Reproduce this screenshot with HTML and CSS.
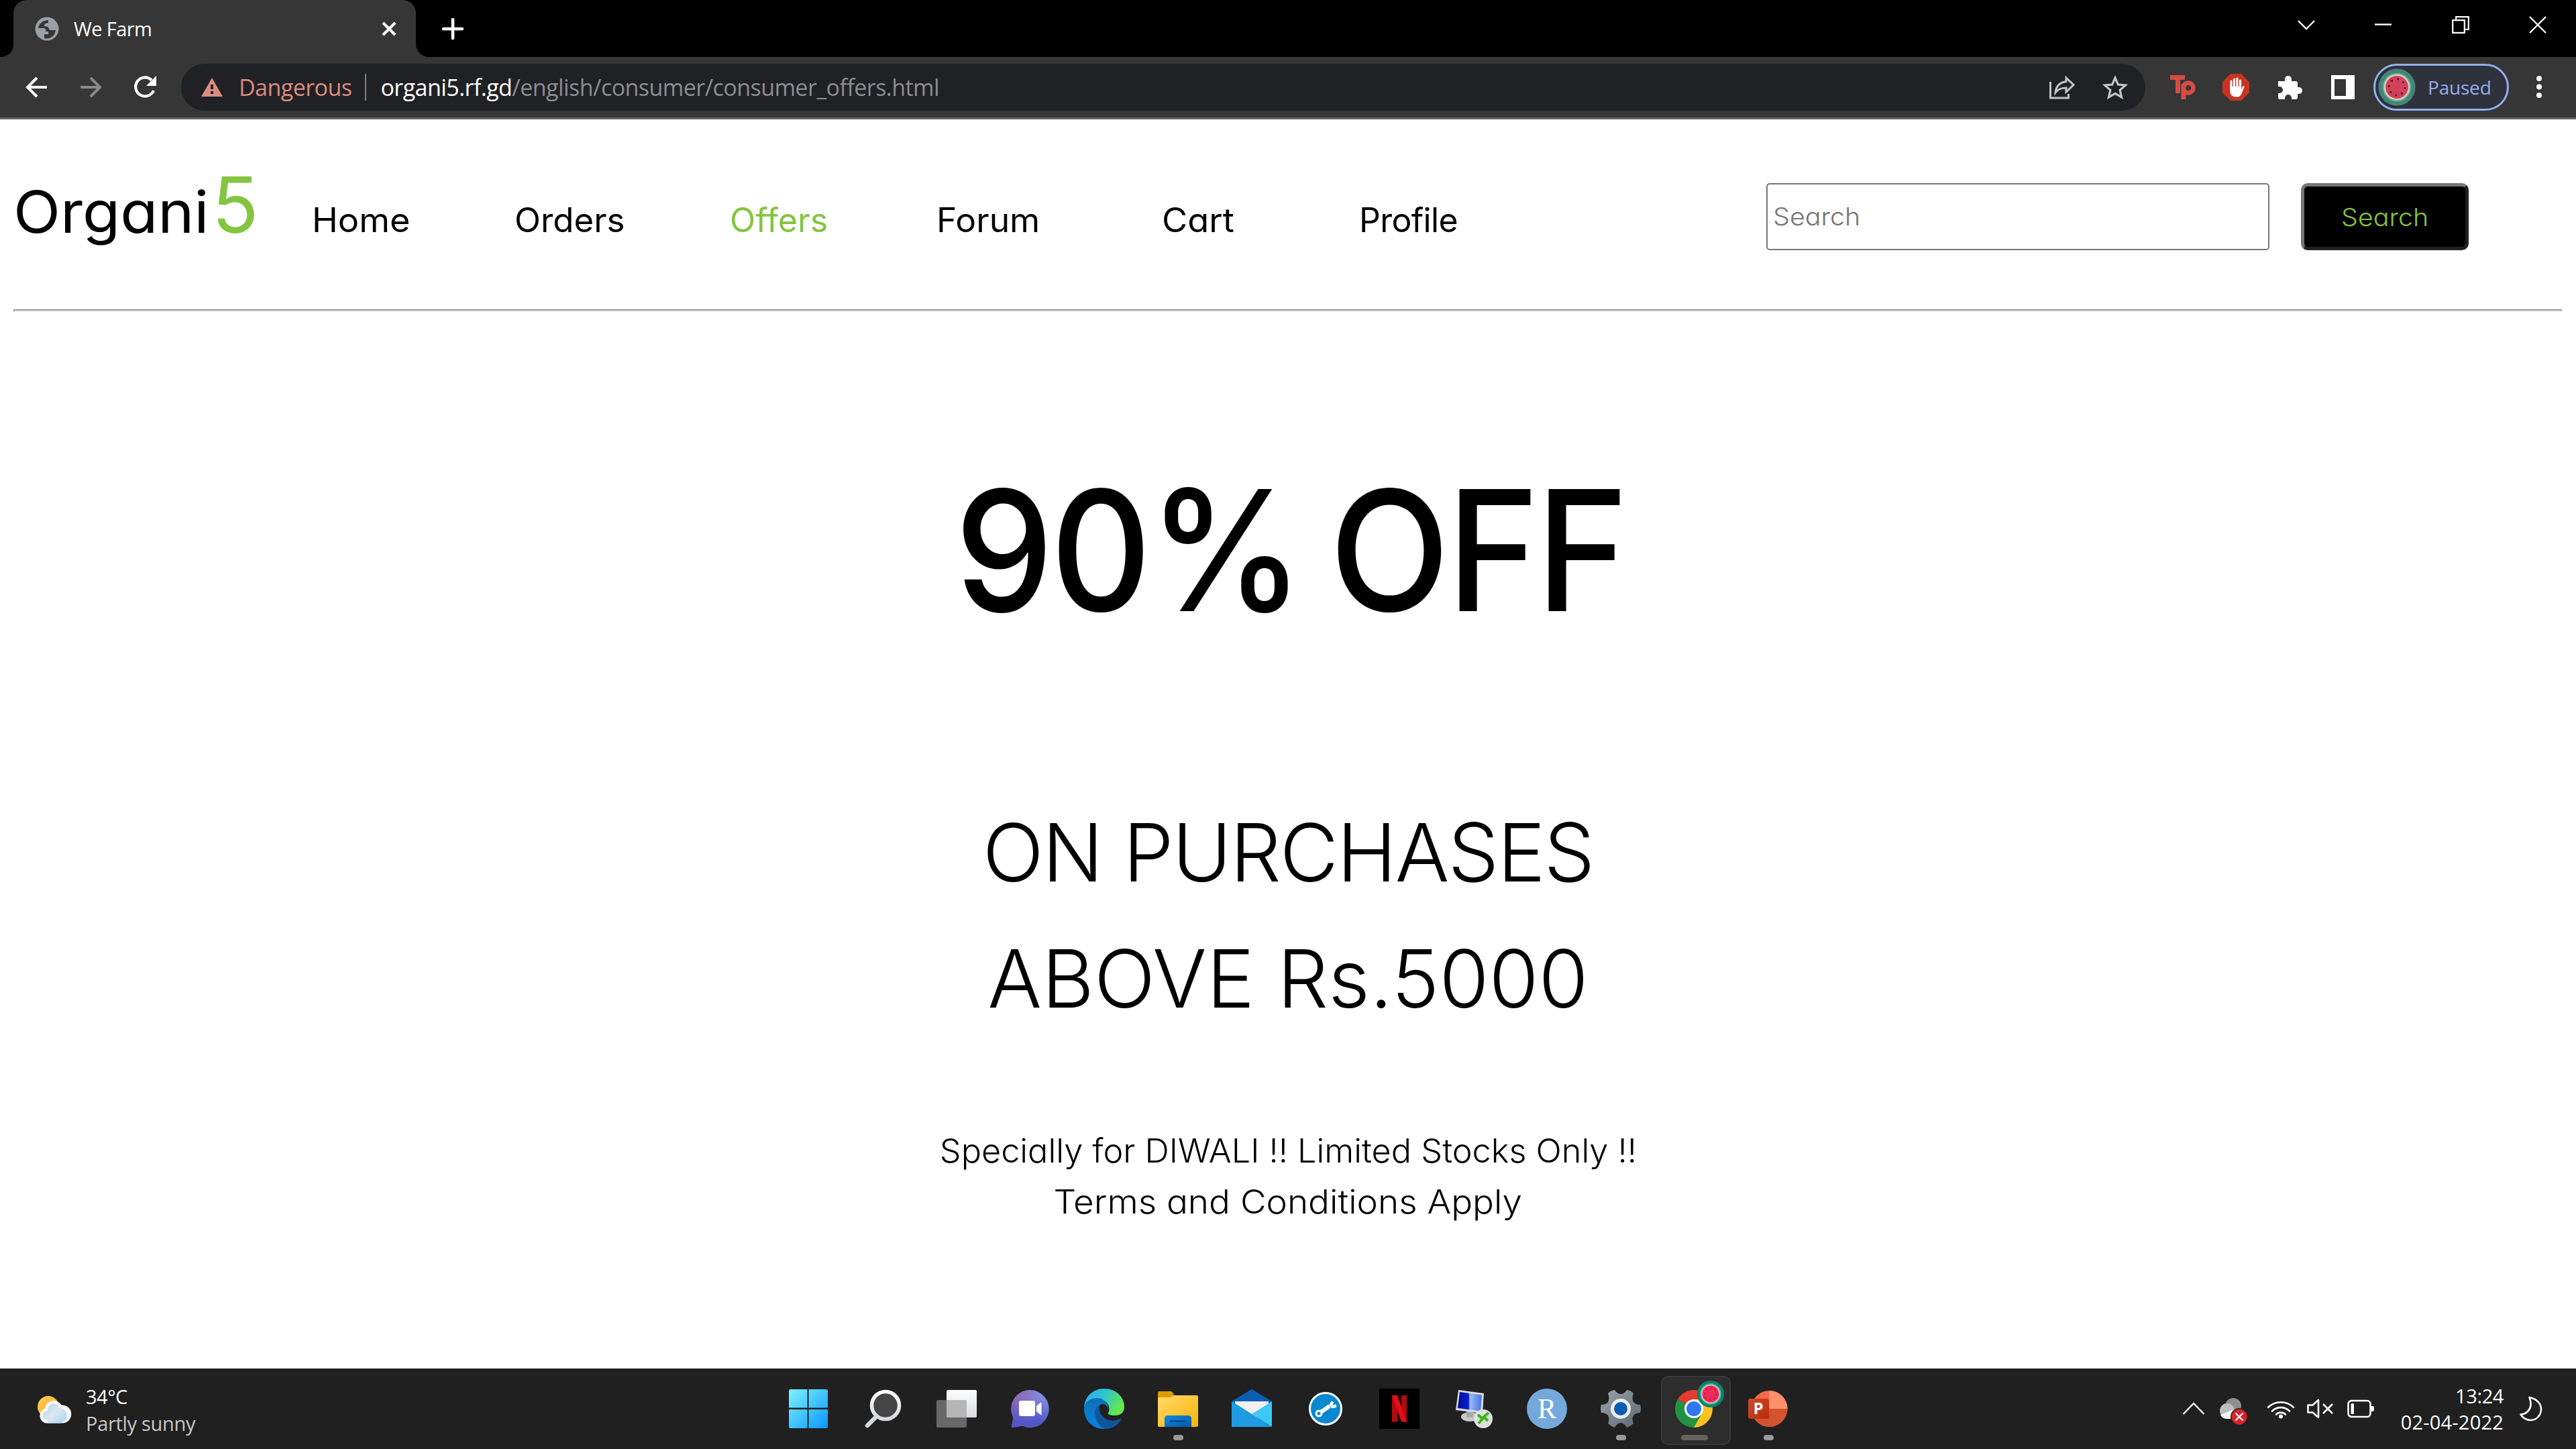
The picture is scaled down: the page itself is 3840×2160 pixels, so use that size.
FILE: index.html
```html
<!DOCTYPE html>
<html lang="en">
<head>
<meta charset="utf-8">
<title>We Farm</title>
<link rel="stylesheet" href="styles.css">
</head>
<body>
<header class="browser">
  <div class="tabstrip">
    <svg class="flare" width="20" height="20" viewBox="0 0 20 20"><path d="M20 0v20H0C12 20 20 12 20 0z" fill="#363636"/></svg>
    <div class="tab">
      <svg width="36" height="36" viewBox="0 0 36 36"><circle cx="18" cy="18" r="17.5" fill="#9aa0a6"/><path d="M20 5c-8 0-14 5-15 12h8c4 0 4 4 3 5h4v4h-6v6c10 2 16-4 17-12h-9c-1-4-3-6-8-6 0-4 2-4 6-5z" fill="#363636"/></svg>
      <span class="tab-title">We Farm</span>
      <svg class="tab-close" width="22" height="22" viewBox="0 0 22 22"><path d="M2 2l18 18M20 2L2 20" stroke="#fff" stroke-width="4"/></svg>
    </div>
    <svg class="flare" width="20" height="20" viewBox="0 0 20 20"><path d="M0 0v20h20C8 20 0 12 0 0z" fill="#363636"/></svg>
    <svg class="newtab" width="32" height="32" viewBox="0 0 32 32"><path d="M16 2v28M2 16h28" stroke="#fff" stroke-width="4.6" stroke-linecap="round"/></svg>
    <div class="winctl">
      <svg width="26" height="26" viewBox="0 0 26 26"><path d="M1 7l12 12L25 7" fill="none" stroke="#fff" stroke-width="2.4"/></svg>
      <svg width="26" height="26" viewBox="0 0 26 26"><path d="M0 12.500h25" stroke="#fff" stroke-width="2.4"/></svg>
      <svg width="26" height="26" viewBox="0 0 26 26"><path d="M1.200 6.200h17.600v18.600H1.200zM6.200 6V1.200h18.600v18.600H19" fill="none" stroke="#fff" stroke-width="2.2"/></svg>
      <svg width="26" height="26" viewBox="0 0 26 26"><path d="M1 1l24 24M25 1L1 25" stroke="#fff" stroke-width="2.4"/></svg>
    </div>
  </div>
  <div class="toolbar">
    <svg class="back" width="34" height="34" viewBox="0 0 34 34"><path d="M32 17H4M17 3L3 17l14 14" fill="none" stroke="#fff" stroke-width="4"/></svg>
    <svg class="forward" width="34" height="34" viewBox="0 0 34 34"><path d="M2 17h28M17 3l14 14-14 14" fill="none" stroke="#8a8a8a" stroke-width="4"/></svg>
    <svg class="reload" width="36" height="36" viewBox="0 0 36 36"><path d="M31 23a14 14 0 1 1-3-15.500" fill="none" stroke="#fff" stroke-width="4.200"/><path d="M35 1v15H20z" fill="#fff"/></svg>
    <div class="omnibox">
      <svg width="32" height="28" viewBox="0 0 32 28"><path d="M16 0l16 28H0z" fill="#dc8b80"/><path d="M16 10v7M16 20v4" stroke="#202124" stroke-width="4"/></svg>
      <span class="danger">Dangerous</span>
      <span class="sep"></span>
      <span class="url"><span class="host">organi5.rf.gd</span>/english/consumer/consumer_offers.html</span>
      <svg class="share" width="38" height="36" viewBox="0 0 38 36"><path d="M1.500 10v24h27v-6" fill="none" stroke="#c4c4c4" stroke-width="3"/><path d="M25 4l11 10.500L25 25v-6c-8 0-12 2-16 7 1-10 6-15 16-16.500z" fill="none" stroke="#c4c4c4" stroke-width="3"/></svg>
      <svg class="star" width="38" height="36" viewBox="0 0 38 36"><path d="M19 4l4.400 10.100 11 1-8.300 7.200 2.500 10.700L19 27.300 9.400 33l2.500-10.700-8.300-7.200 11-1z" fill="none" stroke="#c4c4c4" stroke-width="3.200"/></svg>
    </div>
    <svg class="ext-tp" width="38" height="36" viewBox="0 0 38 36"><path d="M0 0h22v7h-7v20H8V7H0z" fill="#d54d42"/><path d="M20 36V13" stroke="#d54d42" stroke-width="7"/><circle cx="27" cy="19" r="7.500" fill="none" stroke="#d54d42" stroke-width="6.500"/></svg>
    <svg class="ext-stop" width="40" height="40" viewBox="0 0 40 40"><path d="M12 0h16l12 12v16L28 40H12L0 28V12z" fill="#c83420"/><path d="M13 22V11M17.500 20V8M22 20V7M26.500 21V10" stroke="#fff" stroke-width="3.200" stroke-linecap="round"/><path d="M11.400 19h16.700v4l2-4c1-2 3-1 2.500.5l-4.600 11c-2 4-4 4-8 4-6 0-8.600-4-8.600-9z" fill="#fff"/></svg>
    <svg class="ext-puzzle" width="38" height="38" viewBox="0 0 38 38"><path d="M2 10h9V7a5 5 0 0 1 10 0v3h6q3 0 3 3v6h2a5 5 0 0 1 0 10h-2v5q0 3-3 3h-6v-2a5 5 0 0 0-10 0v2H4q-3 0-3-3v-6h2a5 5 0 0 0 0-10H1v-8z" fill="#fff"/></svg>
    <svg class="ext-panel" width="35" height="36" viewBox="0 0 35 36"><path d="M0 0h35v36H0zM5 6v25h17V6z" fill="#fff" fill-rule="evenodd"/></svg>
    <div class="profile">
      <svg width="56" height="56" viewBox="0 0 56 56"><circle cx="28" cy="28" r="27.500" fill="#458678"/><circle cx="28" cy="28" r="21" fill="#66bf9f"/><circle cx="28" cy="28" r="19" fill="#f6c9c4"/><circle cx="28" cy="28" r="17" fill="#d2405a"/><circle cx="28" cy="28" r="12" fill="none" stroke="#3a1620" stroke-width="2.600" stroke-dasharray="2.600 6.820"/></svg>
      <span class="paused">Paused</span>
    </div>
    <svg class="kebab" width="10" height="36" viewBox="0 0 10 36"><g fill="#fff"><circle cx="5" cy="5" r="4"/><circle cx="5" cy="17.500" r="4"/><circle cx="5" cy="30" r="4"/></g></svg>
  </div>
</header>

<main class="page">
  <div class="masthead">
    <div class="logo"><span class="logo-name">Organi</span><span class="logo-five">5</span></div>
    <nav class="menu">
      <a class="home">Home</a><a class="orders">Orders</a><a class="active">Offers</a><a class="forum">Forum</a><a class="cart">Cart</a><a class="account">Profile</a>
    </nav>
    <form class="search">
      <div class="field"><span>Search</span></div>
      <button type="button"><span>Search</span></button>
    </form>
  </div>
  <hr>
  <section class="offer">
    <h1>90% OFF</h1>
    <h2><span class="purchases">ON PURCHASES</span><br>ABOVE Rs.5000</h2>
    <p><span class="special">Specially for DIWALI !! Limited Stocks Only !!</span><br><span class="terms">Terms and Conditions Apply</span></p>
  </section>
</main>

<footer class="taskbar">
  <svg width="0" height="0" class="defs"><defs>
    <linearGradient id="win" x1="0" y1="0" x2="58" y2="58" gradientUnits="userSpaceOnUse"><stop offset="0" stop-color="#7df3ff"/><stop offset="1" stop-color="#0a96ff"/></linearGradient>
    <linearGradient id="sun" x1="0" y1="0" x2="1" y2="1"><stop offset="0" stop-color="#ffd45c"/><stop offset="1" stop-color="#f59a13"/></linearGradient>
    <linearGradient id="cloud" x1="0" y1="0" x2="1" y2="1"><stop offset="0" stop-color="#bcd3e2"/><stop offset=".5" stop-color="#dce8f0"/><stop offset="1" stop-color="#9bd4f5"/></linearGradient>
    <linearGradient id="grey" x1="0" y1="0" x2="0" y2="1"><stop offset="0" stop-color="#fff"/><stop offset="1" stop-color="#d6dade"/></linearGradient>
    <linearGradient id="chat" x1="0" y1="0" x2="1" y2=".3"><stop offset="0" stop-color="#8f62a8"/><stop offset="1" stop-color="#7f93ea"/></linearGradient>
    <linearGradient id="chat2" x1="0" y1="0" x2="0" y2="1"><stop offset=".2" stop-color="#5558c8" stop-opacity="0"/><stop offset=".85" stop-color="#5356c8"/></linearGradient>
    <linearGradient id="edge" x1="0" y1="0" x2="1" y2=".4"><stop offset="0" stop-color="#2fa7ee"/><stop offset=".5" stop-color="#2cc3d5"/><stop offset="1" stop-color="#63e84e"/></linearGradient>
    <linearGradient id="edge2" x1="0" y1="0" x2="0" y2="1"><stop offset="0" stop-color="#0d72b8"/><stop offset="1" stop-color="#0a80dc"/></linearGradient>
    <linearGradient id="folder" x1="0" y1="0" x2="1" y2="1"><stop offset="0" stop-color="#ffd96b"/><stop offset="1" stop-color="#f8b508"/></linearGradient>
    <linearGradient id="blue" x1="0" y1="0" x2="1" y2="1"><stop offset="0" stop-color="#1089de"/><stop offset="1" stop-color="#0858a8"/></linearGradient>
    <linearGradient id="gear" x1="0" y1="0" x2="1" y2="1"><stop offset="0" stop-color="#9aa2a8"/><stop offset="1" stop-color="#5d6873"/></linearGradient>
    <linearGradient id="screen" x1="0" y1="0" x2="1" y2="0"><stop offset="0" stop-color="#000a90"/><stop offset=".45" stop-color="#0a20d8"/><stop offset=".5" stop-color="#9fbcf8"/><stop offset="1" stop-color="#4470e8"/></linearGradient>
    <linearGradient id="ppt" x1="0" y1="0" x2="1" y2="1"><stop offset="0" stop-color="#cf4a25"/><stop offset="1" stop-color="#b52e10"/></linearGradient>
  </defs></svg>
  <div class="weather">
    <svg width="54" height="42" viewBox="0 0 54 42"><circle cx="17" cy="16" r="16" fill="url(#sun)"/><path d="M13 40.500a11.500 11.500 0 0 1-1-22C13 12 18 7 25 7c5 0 9 2.500 11.500 6.500A13.500 13.500 0 0 1 39 40.500z" fill="#f6f8fa"/><path d="M16 36.500a7.500 7.500 0 0 1 0-15c0-6 4-10 9-10 5 0 8 3 9 6.500a11 11 0 0 1 6 20c-3 2.500-6 2.500-9 2.500H16z" fill="url(#cloud)"/></svg>
    <div class="weather-text"><div class="temp">34°C</div><div class="sky">Partly sunny</div></div>
  </div>
  <div class="apps">
    <div class="app"><svg width="60" height="60" viewBox="0 -1 60 60"><path d="M2 0h25.500v27.500H0V2q0-2 2-2zM29.500 0H56q2 0 2 2v25.500H29.500zM0 30h27.500v28H2q-2 0-2-2zM29.500 30H58v26q0 2-2 2H29.500z" fill="url(#win)"/></svg></div>
    <div class="app"><svg width="60" height="60" viewBox="0 0 60 60"><path d="M20 42L7 55" stroke="#d6dade" stroke-width="6.500" stroke-linecap="round"/><circle cx="34" cy="25" r="20.500" fill="#464646" stroke="url(#grey)" stroke-width="5.500"/></svg></div>
    <div class="app"><svg width="60" height="60" viewBox="0 0 60 60"><rect x="15" y="2" width="45" height="41" rx="2" fill="url(#grey)"/><rect x="0" y="17" width="45" height="41" rx="2" fill="#686868"/><path d="M15 17h30v26H15z" fill="#b6b6b6"/></svg></div>
    <div class="app"><svg width="60" height="60" viewBox="0 0 60 60"><path d="M30 2a28 28 0 1 1-12 53.500L3 58q-1.500 0-1-1.500L4.500 43A28 28 0 0 1 30 2z" fill="url(#chat)"/><path d="M30 2a28 28 0 1 1-12 53.500L3 58q-1.500 0-1-1.500L4.500 43A28 28 0 0 1 30 2z" fill="url(#chat2)"/><rect x="13" y="18" width="24" height="23" rx="3" fill="#fff"/><path d="M39.500 26l6.500-5v18l-6.500-5z" fill="#fff" stroke="#fff" stroke-linejoin="round"/></svg></div>
    <div class="app"><svg width="60" height="60" viewBox="0 0 60 60"><path d="M0 28C1 12 13 0 30 0c18 0 30 13 30 27 0 9-6 13-14 13-7 0-12-2-10-4 3-4 2-14-6-18C20 12 5 15 0 28z" fill="url(#edge)"/><path d="M0 30C0 19 10 14 19 14c11 0 18 8 17 17-1-5-4-8-8-8-8 0-12 10-10 18 2 9 9 16 15 18.800C14 62 0 48 0 30z" fill="url(#edge2)"/><path d="M25 23c-7 3-11 11-8 20 3 10 10 17 17 17 9-1 17-6 21-14 .5-1-.5-2-2-1-12 6-23 1-28-7-3-6-3-11 0-15z" fill="#0f55a0"/></svg></div>
    <div class="app run"><svg width="60" height="60" viewBox="0 0 60 60"><path d="M0 6q0-2 2-2h17q2 0 3 2l3 5v8H0z" fill="#dd9b05"/><path d="M0 15q0-2 2-2h17l5-3h34q2 0 2 2v43q0 2-2 2H2q-2 0-2-2z" fill="url(#folder)"/><path d="M10 57V45q0-5 5-5h30q5 0 5 5v12z" fill="url(#blue)"/><path d="M18 48.500h24" stroke="#0a4a94" stroke-width="2.600"/></svg></div>
    <div class="app"><svg width="60" height="60" viewBox="0 0 60 60"><path d="M0 19L28 2q2-1.500 4 0l28 17-4 9H4z" fill="#0a5fb5"/><path d="M5 19h50v14L30 48 5 33z" fill="#f1f1f1"/><path d="M0 19l30 19-30 19z" fill="#28a8ea"/><path d="M60 19L30 38l30 19z" fill="#3cc8f4"/><path d="M0 57V19l60 38z" fill="#1f9be4"/></svg></div>
    <div class="app"><svg width="60" height="60" viewBox="0 0 60 60"><circle cx="30" cy="30" r="23.500" fill="#0788d0" stroke="#fff" stroke-width="3"/><path d="M23 35L36 26" stroke="#fff" stroke-width="6"/><circle cx="20" cy="37" r="4" fill="none" stroke="#fff" stroke-width="3"/><path d="M40.500 19.500l-2.500 4.500 2.500 3 5.500-1.500" fill="none" stroke="#fff" stroke-width="4.500"/></svg></div>
    <div class="app"><svg width="60" height="60" viewBox="0 0 60 60"><path d="M0 0h60v60H0z"/><path d="M19 10h8v39l-8 1zM33 10h8v40l-8-1z" fill="#b20a13"/><path d="M19 10h8l14 40-8-1z" fill="#e50c17"/></svg></div>
    <div class="app"><svg width="60" height="60" viewBox="0 0 60 60"><ellipse cx="25" cy="42" rx="13" ry="7" fill="#c9c9c9"/><path d="M20 34h10v9H20z" fill="#a8a8a8"/><path d="M8 2l38 5-2 30L4 32z" fill="#dadada"/><path d="M10 5l33 4.500-2 24L7 29z" fill="url(#screen)"/><circle cx="45" cy="45" r="14" fill="#dedede"/><path d="M37 39l7 6-6 7M53 36l-7 6 6 6" fill="none" stroke="#38b51c" stroke-width="4"/></svg></div>
    <div class="app"><div class="rapp">R</div></div>
    <div class="app run"><svg width="60" height="60" viewBox="0 0 60 60"><path d="M21 2q4 6 9 6t9-6q7 1 10 5-3 8 0 13 3 4 10 4 2 6 0 12-7 0-10 4-3 5 0 12-4 4-10 6-4-7-9-7t-9 7q-6-2-10-6 3-7 0-12-3-4-10-4-2-6 0-12 7 0 10-4 3-5 0-13 3-4 10-5z" fill="url(#gear)"/><circle cx="30" cy="30" r="12.500" fill="#0c5db0" stroke="#ececec" stroke-width="5"/></svg></div>
    <div class="app current"><svg width="60" height="60" viewBox="0 0 60 60"><path d="M30 30L5.800 16A28 28 0 0 1 54.200 16z" fill="#e33b2e"/><path d="M30 30L5.800 16A28 28 0 0 0 30 58l12-21z" fill="#229342"/><path d="M30 30l12 7-12 21A28 28 0 0 0 54.200 16H30z" fill="#fcc31e"/><circle cx="30" cy="30" r="14" fill="#fff"/><circle cx="30" cy="30" r="11" fill="#2f78ee"/></svg>
      <svg class="badge" width="40" height="40" viewBox="0 0 40 40"><circle cx="20" cy="20" r="20" fill="#0b7f70"/><circle cx="20" cy="20" r="16" fill="#39b896"/><circle cx="20" cy="20" r="14" fill="#f7b8b4"/><circle cx="20" cy="20" r="12.500" fill="#ee2a58"/><circle cx="20" cy="20" r="9" fill="none" stroke="#b01c42" stroke-width="2" stroke-dasharray="2 5"/></svg></div>
    <div class="app run"><svg width="60" height="60" viewBox="0 0 60 60"><circle cx="31.500" cy="30" r="27" fill="#ee6c47"/><path d="M31.500 3a27 27 0 0 1 27 27h-27z" fill="#ff8f6b"/><path d="M4.500 30a27 27 0 0 0 54 0z" fill="#d35230"/><rect x="0" y="15" width="31" height="30" rx="3" fill="url(#ppt)"/><text x="15" y="38" text-anchor="middle" class="pletter">P</text></svg></div>
  </div>
  <div class="tray">
    <svg width="34" height="20" viewBox="0 0 34 20"><path d="M1.500 18L17 2l15.500 16" fill="none" stroke="#fff" stroke-width="2.400"/></svg>
    <svg class="t-cloud" width="42" height="42" viewBox="0 0 42 42"><circle cx="20" cy="12" r="12" fill="#8e8e8e"/><circle cx="11" cy="19" r="11" fill="#bdbdbd"/><path d="M1 25l20-8 8 14H9q-6-1-8-6z" fill="#f4f4f4"/><circle cx="29" cy="28" r="13" fill="#202020"/><circle cx="29" cy="28" r="11.500" fill="#dc2229"/><path d="M23.500 22.500l11 11m0-11l-11 11" stroke="#fff" stroke-width="2.200"/></svg>
    <svg class="t-wifi" width="42" height="30" viewBox="0 0 42 30"><path d="M2 13a27 27 0 0 1 38 0M8 18.500a18.500 18.500 0 0 1 26 0M14 23.500a10 10 0 0 1 14 0" fill="none" stroke="#fff" stroke-width="2.600" stroke-linecap="round"/><circle cx="21" cy="26.500" r="3" fill="#fff"/></svg>
    <svg class="t-vol" width="40" height="30" viewBox="0 0 40 30"><path d="M1.500 9.500h7L17 2v26l-8.500-7.500h-7z" fill="none" stroke="#fff" stroke-width="2.600" stroke-linejoin="round"/><path d="M24 8l14 14M38 8L24 22" stroke="#fff" stroke-width="2.600"/></svg>
    <svg class="t-bat" width="42" height="28" viewBox="0 0 42 28"><rect x="1.500" y="2" width="33" height="24" rx="5" fill="none" stroke="#fff" stroke-width="2.600"/><rect x="5.500" y="6" width="4.500" height="16" rx="1.500" fill="#fff"/><path d="M35 10h3q2 0 2 2v4q0 2-2 2h-3z" fill="#fff"/></svg>
    <div class="clock"><div class="time">13:24</div><div>02-04-2022</div></div>
    <svg class="t-moon" width="34" height="38" viewBox="0 0 34 38"><path d="M14.500 2C25 4 32 11 32 19.500 32 29 25 36 16 36 9.500 36 4 32 1.500 27.500 10 27 15.500 21 16.500 14c.5-4-.5-8-2-12z" fill="none" stroke="#fff" stroke-width="2.600" stroke-linejoin="round"/></svg>
  </div>
</footer>
</body>
</html>
```
FILE: styles.css
```css
* { box-sizing: border-box; }
body { margin: 0; width: 3840px; height: 2160px; overflow: hidden; display: flex; flex-direction: column; background: #fff; font-family: "Open Sans", "Noto Sans", sans-serif; }
svg { display: block; flex: none; }

/* Browser window */
.browser { flex: none; height: 178px; background: #363636; border-bottom: 3px solid #666; }
.tabstrip { display: flex; height: 85px; background: #000; }
.flare { align-self: flex-end; }
.tab { display: flex; align-items: center; width: 600px; background: #363636; border-radius: 20px 20px 0 0; padding-left: 32px; color: #fff; font-size: 29px; }
.tab-title { flex: 1; padding-left: 22px; letter-spacing: -0.6px; }
.tab-close { margin-right: 29px; }
.newtab { margin: 27px 0 0 19px; }
.winctl { display: flex; gap: 89px; margin: 24px 44px 0 auto; }
.toolbar { display: flex; align-items: center; height: 90px; }
.back { margin-left: 38px; }
.forward, .reload { margin-left: 46px; }
.omnibox { display: flex; align-items: center; width: 2928px; height: 70px; margin-left: 36px; padding-left: 30px; border-radius: 35px; background: #202124; font-size: 34px; letter-spacing: -0.55px; }
.danger { color: #dc8b80; padding-left: 24px; }
.sep { width: 2px; height: 40px; background: #808080; margin: 0 21px 0 20px; }
.url { color: #8b8d90; }
.host { color: #fff; }
.share { margin-left: auto; }
.star { margin: 0 26px 0 41px; }
.ext-tp { margin-left: 37px; }
.ext-stop { margin-left: 40px; }
.ext-puzzle, .ext-panel { margin-left: 42px; }
.profile { display: flex; align-items: center; width: 202px; height: 70px; margin-left: 28px; border: 3px solid #92aff0; border-radius: 35px; background: #2f323b; padding-left: 4px; color: #92aff0; font-size: 28px; }
.paused { padding-left: 18px; letter-spacing: -0.2px; }
.kebab { margin-left: 40px; }

/* Page */
.page { flex: 1; padding: 0 20px; font-family: Inter, Lato, sans-serif; font-feature-settings: "cv11"; color: #000; }
.masthead { display: flex; height: 283px; }
.logo { display: flex; align-items: baseline; margin-top: 68px; line-height: 120px; width: 445px; font-weight: 430; }
.logo-name { font-size: 86px; transform: scaleX(1.065); transform-origin: left; }
.logo-five { margin-left: 22px; font-size: 115px; color: #84c441; }
.menu { display: grid; grid-template-columns: 302px 321px 308px 336px 294px auto; margin-top: 110px; font-size: 50px; line-height: 80px; height: 80px; font-weight: 430; }
.menu a { transform-origin: left; }
.home, .cart { transform: scaleX(1.045); }
.orders { transform: scaleX(1.02); }
.forum { transform: scaleX(1.03); }
.account { letter-spacing: -0.7px; }
.active { color: #84c441; }
.search { display: flex; margin: 95px 140px 0 auto; gap: 47px; }
.search span { display: inline-block; transform: scaleX(1.065); }
.field { width: 750px; height: 100px; border: 2px solid #767676; border-radius: 5px; color: #757575; font-size: 37px; font-weight: 300; line-height: 96px; padding-left: 12px; }
.search button { width: 250px; height: 100px; border: 5px solid; border-color: #767676 #212121 #212121 #767676; border-radius: 10px; background: #000; color: #84c441; font-family: inherit; font-size: 37px; font-weight: 300; font-feature-settings: "cv11"; padding: 0; }
hr { margin: 0; border: 2px solid; border-color: #9a9a9a #eee #eee #9a9a9a; }
.offer { text-align: center; }
h1 { margin: 205px 0 0; font-size: 250px; line-height: 300px; font-weight: 450; letter-spacing: -5px; word-spacing: -16px; transform: translateX(3px) scaleX(0.935); }
h2 { margin: 207px 0 0; font-size: 120px; line-height: 188px; font-weight: 300; }
.purchases { letter-spacing: -2.1px; }
p { margin: 125px 0 0; font-size: 49px; line-height: 76px; font-weight: 300; }
.special, .terms { display: inline-block; transform: scaleX(1.028); }
.terms { transform: scaleX(1.082); }

/* Taskbar */
.taskbar { flex: none; display: flex; height: 120px; background: #202020; color: #fff; font-size: 29px; }
.defs { position: absolute; }
.weather { display: flex; width: 1151px; padding-left: 55px; }
.weather > svg { margin-top: 41px; }
.weather-text { padding: 22px 0 0 19px; line-height: 40px; }
.temp { letter-spacing: -0.5px; }
.sky { color: #c8c8c8; letter-spacing: -0.3px; }
.apps { display: flex; }
.app { position: relative; width: 110px; height: 120px; padding: 30px 25px; }
.run::after, .current::after { content: ""; position: absolute; left: 48px; top: 99px; width: 15px; height: 8px; border-radius: 4px; background: #9a9a9a; }
.current::before { content: ""; position: absolute; left: 5px; top: 11px; width: 100px; height: 99px; border: 2px solid #383838; border-radius: 10px; background: #2d2d2d; }
.current > svg { position: relative; left: -1px; }
.current::after { left: 35px; width: 40px; background: #66625c; }
.current > .badge { position: absolute; left: 59px; top: 18px; }
.rapp { width: 60px; height: 60px; border-radius: 50%; background: #75a9db; text-align: center; font: 42px/60px "Liberation Serif", serif; }
.pletter { font: bold 24px "Open Sans", sans-serif; fill: #fff; }
.tray { display: flex; align-items: center; margin-left: auto; padding-right: 50px; }
.t-cloud { margin: 9px 0 0 22px; }
.t-wifi { margin-left: 28px; }
.t-vol { margin-left: 18px; }
.t-bat { margin-left: 20px; }
.clock { width: 191px; text-align: right; line-height: 39px; letter-spacing: 0.2px; }
.time { letter-spacing: -0.4px; }
.t-moon { margin-left: 24px; }
```
